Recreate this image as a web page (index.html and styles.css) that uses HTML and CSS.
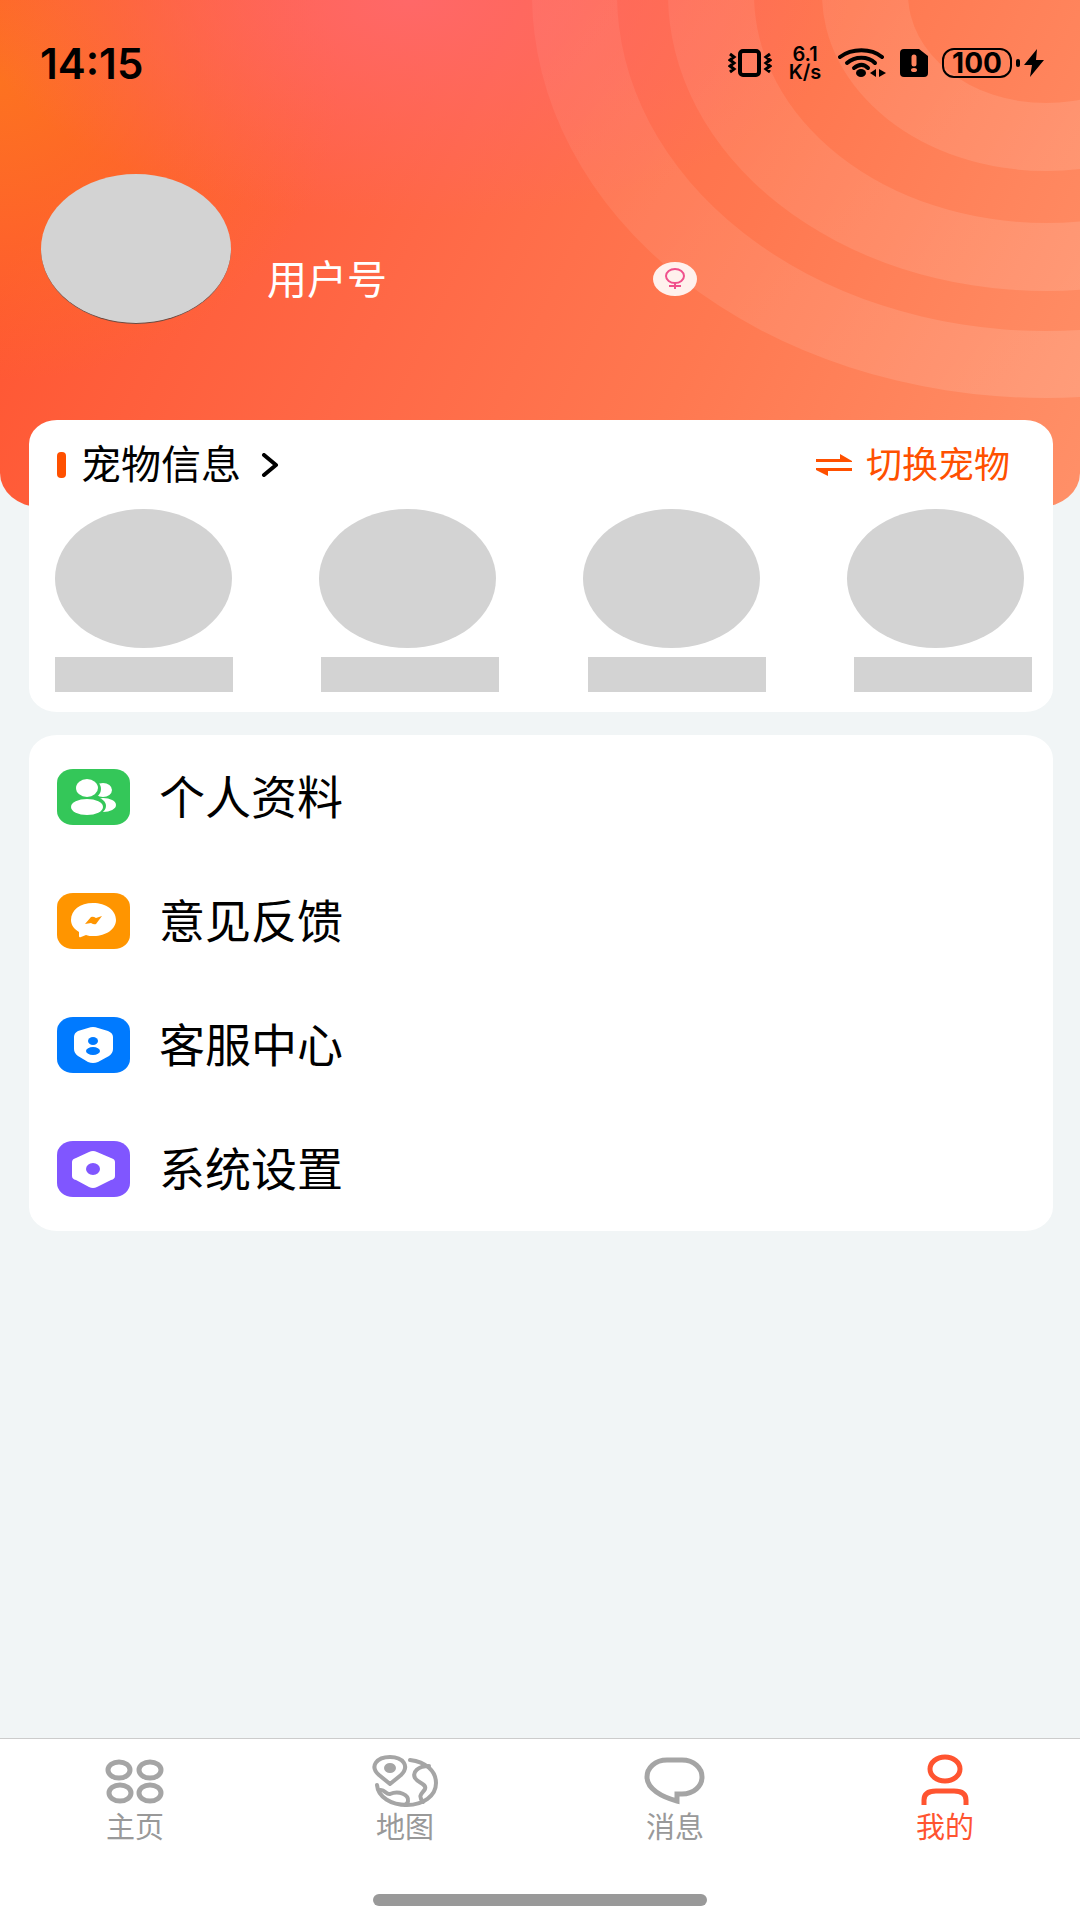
FILE: index.html
```html
<!DOCTYPE html>
<html lang="zh-CN">

<head>
    <meta charset="UTF-8">
    <meta name="viewport" content="width=device-width,initial-scale=1.0">
    <title>我的</title>
    <link rel="stylesheet" href="styles.css">
</head>

<body>
    <header class="hero">
        <svg class="rings" viewBox="0 0 550 400" aria-hidden="true">
            <defs>
                <linearGradient id="ringFill" gradientUnits="userSpaceOnUse" x1="0" y1="0" x2="500" y2="400">
                    <stop offset="0" stop-color="#fff" stop-opacity="0.05" />
                    <stop offset="1" stop-color="#fff" stop-opacity="0.13" />
                </linearGradient>
            </defs>
            <g fill="url(#ringFill)" fill-rule="evenodd">
                <path d="M2 -6a514 404 0 0 0 1028 0a514 404 0 0 0 -1028 0zM87 -6a429 337 0 0 0 858 0a429 337 0 0 0 -858 0z" />
                <path d="M138 -6a378 297 0 0 0 756 0a378 297 0 0 0 -756 0zM224 -6a292 229 0 0 0 584 0a292 229 0 0 0 -584 0z" />
                <path d="M292 -6a224 177 0 0 0 448 0a224 177 0 0 0 -448 0zM378 -6a138 109 0 0 0 276 0a138 109 0 0 0 -276 0z" />
            </g>
        </svg>

        <div class="status-bar">
            <time class="clock">14:15</time>
            <div class="status-icons">
                <svg width="44" height="30" viewBox="0 0 44 30" fill="none" stroke="#000" aria-label="振动">
                    <rect x="12" y="3" width="19" height="24" rx="3" stroke-width="4" />
                    <path d="M2 6l4 3-4 3 4 3-4 3 4 3-4 3M42 6l-4 3 4 3-4 3 4 3-4 3 4 3" stroke-width="3" />
                </svg>
                <div class="speed"><span>6.1</span><span>K/s</span></div>
                <svg width="48" height="30" viewBox="0 0 48 30" aria-label="Wi-Fi">
                    <g fill="none" stroke="#000" stroke-width="4" stroke-linecap="round">
                        <path d="M2 9C14 0 33 0 44 9" />
                        <path d="M9 15C17 8 30 8 37 15" />
                        <path d="M16 20C21 16 26 16 30 20" />
                    </g>
                    <ellipse cx="23" cy="25" rx="5" ry="4" />
                    <path d="M32 25l6-4v8zM41 21l7 4-7 4z" />
                </svg>
                <svg width="28" height="30" viewBox="0 0 28 30" aria-label="SIM 卡">
                    <path d="M4 1H19L28 8V25Q28 29 24 29H4Q0 29 0 25V5Q0 1 4 1z" />
                    <path d="M14 9V16" stroke="#ff855f" stroke-width="5" stroke-linecap="round" />
                    <ellipse cx="14" cy="22" rx="3" ry="2" fill="#ff855f" />
                </svg>
                <div class="battery">
                    <span class="battery-level">100</span>
                    <span class="battery-nub"></span>
                    <svg width="20" height="28" viewBox="0 0 20 28" aria-label="充电中">
                        <path d="M13 0L0 16H8L6 28L20 11H12z" />
                    </svg>
                </div>
            </div>
        </div>

        <div class="profile">
            <div class="avatar"></div>
            <span class="username">用户号</span>
            <span class="gender">
                <svg width="22" height="22" viewBox="0 0 22 22" fill="none" stroke="#f0508c" stroke-width="2" aria-label="女">
                    <ellipse cx="11" cy="8" rx="9" ry="7" />
                    <path d="M11 15V21M5 18H17" />
                </svg>
            </span>
        </div>
    </header>

    <main class="content">
        <section class="card pets">
            <div class="pets-header">
                <a class="pets-title" href="#">
                    <span class="marker"></span>
                    <span class="label">宠物信息</span>
                    <svg width="18" height="24" viewBox="0 0 18 24" fill="none" stroke="#000" stroke-width="4" stroke-linecap="round" stroke-linejoin="round" aria-hidden="true">
                        <path d="M3 2L15 12L3 22" />
                    </svg>
                </a>
                <button class="switch-button" type="button">
                    <svg width="36" height="24" viewBox="0 0 36 24" fill="#ff5000" aria-hidden="true">
                        <path d="M0 6H24V1L36 8V9H0zM36 18H12V23L0 17V15H36z" />
                    </svg>
                    <span class="label">切换宠物</span>
                </button>
            </div>
            <div class="pet-photos">
                <span class="pet-photo"></span>
                <span class="pet-photo"></span>
                <span class="pet-photo"></span>
                <span class="pet-photo"></span>
            </div>
            <div class="pet-names">
                <span class="pet-name"></span>
                <span class="pet-name"></span>
                <span class="pet-name"></span>
                <span class="pet-name"></span>
            </div>
        </section>

        <nav class="card menu">
            <a class="menu-item" href="#">
                <svg class="menu-icon green" viewBox="0 0 73 56" fill="#fff" aria-hidden="true">
                    <ellipse cx="46" cy="21" rx="9" ry="7" />
                    <ellipse cx="46" cy="36" rx="13" ry="7" />
                    <g fill="#34c759">
                        <ellipse cx="30" cy="20" rx="14" ry="11" />
                        <ellipse cx="30" cy="37" rx="19" ry="11" />
                    </g>
                    <ellipse cx="30" cy="19" rx="11" ry="9" />
                    <ellipse cx="30" cy="38" rx="16" ry="8" />
                </svg>
                <span class="label">个人资料</span>
            </a>
            <a class="menu-item" href="#">
                <svg class="menu-icon orange" viewBox="0 0 73 56" aria-hidden="true">
                    <path fill="#fff" d="M36 10C49 10 59 17 59 27C59 36 49 43 37 43C34 43 31 43 29 42L24 44Q22 45 22 43V39C17 36 14 32 14 27C14 17 23 10 36 10z" />
                    <path fill="#ff9500" d="M28 31L34 24Q36 23 39 25L45 23L39 31Q37 32 34 30z" />
                </svg>
                <span class="label">意见反馈</span>
            </a>
            <a class="menu-item" href="#">
                <svg class="menu-icon blue" viewBox="0 0 73 56" aria-hidden="true">
                    <path fill="#fff" d="M31 11Q36 9 41 11L51 14Q56 16 56 20V32Q56 36 52 39L41 45Q36 47 31 45L21 39Q17 36 17 32V20Q17 16 21 14z" />
                    <g fill="#007aff">
                        <ellipse cx="36" cy="24" rx="5" ry="4" />
                        <ellipse cx="36" cy="34" rx="7" ry="4" />
                    </g>
                </svg>
                <span class="label">客服中心</span>
            </a>
            <a class="menu-item" href="#">
                <svg class="menu-icon purple" viewBox="0 0 73 56" aria-hidden="true">
                    <path fill="#fff" d="M32 11Q36 9 40 11L54 17Q58 18 58 21V35Q58 38 54 39L40 46Q36 48 32 46L19 39Q15 38 15 35V21Q15 18 19 17z" />
                    <ellipse fill="#8056ff" cx="36" cy="28" rx="7" ry="6" />
                </svg>
                <span class="label">系统设置</span>
            </a>
        </nav>
    </main>

    <footer class="tab-bar">
        <nav class="tabs">
            <a class="tab" href="#">
                <svg class="tab-icon" viewBox="0 0 66 54" stroke-width="5" aria-hidden="true">
                    <ellipse cx="17" cy="16" rx="11" ry="8" />
                    <ellipse cx="48" cy="16" rx="11" ry="8" />
                    <ellipse cx="18" cy="39" rx="11" ry="8" />
                    <ellipse cx="48" cy="39" rx="11" ry="8" />
                </svg>
                主页
            </a>
            <a class="tab" href="#">
                <svg class="tab-icon" viewBox="0 0 66 54" stroke-width="4" stroke-linecap="round" stroke-linejoin="round" aria-hidden="true">
                    <path d="M18 30L7 21C-3 12 5 3 18 3C31 3 38 12 29 21z" />
                    <ellipse cx="18" cy="14" rx="4" ry="3" fill="#a5a5a5" />
                    <path d="M38 6C54 8 64 17 64 29C64 42 51 51 35 51C19 51 6 43 5 31" />
                    <path d="M57 12C46 12 40 18 43 24C46 29 55 30 53 35C51 39 45 41 51 48" />
                    <path d="M8 36C13 35 14 41 18 40C27 36 37 41 36 47Q36 49 33 51" />
                </svg>
                地图
            </a>
            <a class="tab" href="#">
                <svg class="tab-icon" viewBox="0 0 66 54" stroke-width="5" aria-hidden="true">
                    <path d="M25 6H40C52 6 60 14 60 23C60 32 52 40 40 40H35V47C20 43 5 35 5 23C5 14 13 6 25 6z" />
                </svg>
                消息
            </a>
            <a class="tab active" href="#">
                <svg class="tab-icon" viewBox="0 0 66 54" stroke-width="5" aria-hidden="true">
                    <ellipse cx="33" cy="15" rx="15" ry="12" />
                    <path d="M12 51V46C12 39 17 37 24 37H42C50 37 54 40 54 46V51" />
                </svg>
                我的
            </a>
        </nav>
        <div class="home-indicator"></div>
    </footer>
</body>

</html>
```
FILE: styles.css
```css
* {
    box-sizing: border-box;
}

body {
    margin: 0;
    min-height: 100vh;
    display: flex;
    flex-direction: column;
    font-family: "Noto Sans CJK SC", sans-serif;
    color: #000;
    background: #f1f5f6;
}

a {
    color: inherit;
    text-decoration: none;
}

svg {
    display: block;
    flex-shrink: 0;
}

.hero {
    position: relative;
    height: 507px;
    padding: 32px 36px 0 40px;
    border-radius: 0 0 40px 40px / 0 0 34px 34px;
    overflow: hidden;
    background:
        radial-gradient(ellipse 440px 220px at 38% 0, #ff6868, rgba(255, 104, 104, 0)),
        radial-gradient(ellipse 340px 300px at 0 16%, #fd7220, rgba(253, 114, 32, 0)),
        linear-gradient(115deg, #ff5733 10%, #ff6846 40%, #ff7850 65%, #ff9068 100%);
}

.rings {
    position: absolute;
    top: 0;
    right: 0;
    width: 550px;
    height: 400px;
}

.status-bar {
    position: relative;
    display: flex;
    justify-content: space-between;
    align-items: center;
    height: 62px;
    font-family: Inter, sans-serif;
}

.clock {
    font-size: 42px;
    font-weight: 600;
}

.status-icons {
    display: flex;
    align-items: center;
    gap: 14px;
}

.speed {
    display: flex;
    flex-direction: column;
    align-items: center;
    width: 38px;
    font-size: 20px;
    font-weight: 600;
    line-height: 18px;
}

.battery {
    display: flex;
    align-items: center;
    gap: 4px;
}

.battery-level {
    width: 70px;
    height: 30px;
    border: 2px solid #000;
    border-radius: 12px;
    font-size: 28px;
    font-weight: 700;
    line-height: 26px;
    text-align: center;
}

.battery-nub {
    width: 4px;
    height: 8px;
    border-radius: 2px;
    background: #000;
}

.profile {
    position: relative;
    display: flex;
    align-items: center;
    margin: 80px 0 0 1px;
}

.avatar {
    width: 190px;
    height: 150px;
    border-radius: 50%;
    background: #d3d3d3;
    border-bottom: 1px solid #6b4a40;
}

.username {
    width: 386px;
    margin: 56px 0 0 36px;
    font-size: 40px;
    line-height: 60px;
    color: #fff;
}

.gender {
    display: flex;
    justify-content: center;
    align-items: center;
    width: 44px;
    height: 34px;
    margin-top: 60px;
    border-radius: 50%;
    background: #fff1ed;
}

.content {
    position: relative;
    display: flex;
    flex-direction: column;
    flex-grow: 1;
    gap: 23px;
    margin-top: -87px;
    padding: 0 27px 0 29px;
}

.card {
    background: #fff;
    border-radius: 28px / 24px;
}

/* lifts CJK text to the middle of the icon beside it */
.label {
    padding-bottom: 6px;
}

.pets {
    padding: 18px 21px 20px 26px;
}

.pets-header {
    display: flex;
    justify-content: space-between;
    align-items: center;
    height: 54px;
    padding-right: 22px;
}

.pets-title {
    display: flex;
    align-items: center;
    gap: 20px;
    font-size: 40px;
    line-height: 54px;
}

.marker {
    width: 9px;
    height: 26px;
    margin: 0 -5px 0 2px;
    border-radius: 4px;
    background: #ff5000;
}

.switch-button {
    display: flex;
    align-items: center;
    gap: 14px;
    padding: 0;
    border: none;
    background: none;
    font-family: inherit;
    font-size: 36px;
    line-height: 54px;
    color: #ff5000;
    cursor: pointer;
}

.pet-photos,
.pet-names {
    display: flex;
    justify-content: space-between;
}

.pet-photos {
    margin-top: 17px;
    padding-right: 8px;
}

.pet-photo {
    width: 177px;
    height: 139px;
    border-radius: 50%;
    background: #d3d3d3;
}

.pet-names {
    margin-top: 9px;
}

.pet-name {
    width: 178px;
    height: 35px;
    background: #d3d3d3;
}

.menu-item {
    display: flex;
    align-items: center;
    gap: 29px;
    height: 124px;
    padding: 0 28px;
    font-size: 46px;
}

.menu-icon {
    width: 73px;
    height: 56px;
    border-radius: 16px / 14px;
}

.green {
    background: #34c759;
}

.orange {
    background: #ff9500;
}

.blue {
    background: #007aff;
}

.purple {
    background: #8056ff;
}

.tab-bar {
    padding: 15px 0 14px;
    border-top: 1px solid #ccc;
    background: #fff;
}

.tabs {
    display: grid;
    grid-template-columns: repeat(4, 1fr);
}

.tab {
    display: flex;
    flex-direction: column;
    align-items: center;
    font-size: 29px;
    line-height: 34px;
    color: #999;
}

.tab-icon {
    width: 66px;
    height: 54px;
    fill: none;
    stroke: #a5a5a5;
}

.active {
    color: #ff5430;
}

.active .tab-icon {
    stroke: #ff5430;
}

.home-indicator {
    width: 334px;
    height: 12px;
    margin: 52px auto 0;
    border-radius: 6px;
    background: #999;
}
```
